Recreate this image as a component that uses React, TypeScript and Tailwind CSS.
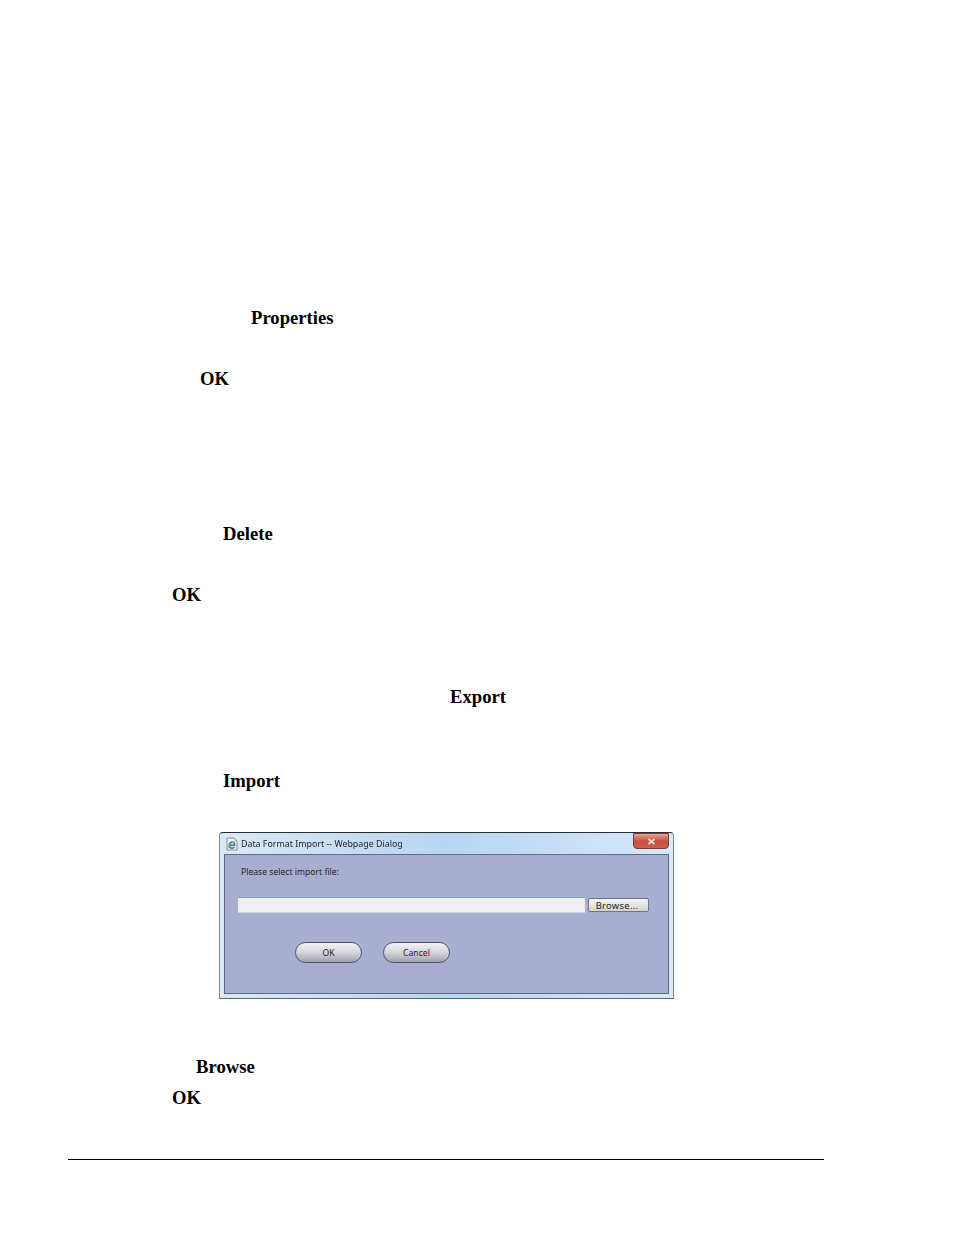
export default function App() {
  const bold = "h-6 leading-6 text-[18.67px] font-bold text-black font-['Liberation_Serif',serif] whitespace-nowrap";
  const pill = "w-[67px] h-[21px] rounded-full border-[1.5px] border-[#4a5164] bg-gradient-to-b from-[#f4f4f6] via-[#d4d4da] to-[#a0a3b2] flex items-center justify-center text-[8.6px] leading-none pt-[2px]";
  return (
    <div className="w-[954px] h-[1235px] bg-white overflow-hidden pt-[306px]">
      <div className={`${bold} pl-[251px]`}>Properties</div>
      <div className={`${bold} pl-[200px] mt-[37px]`}>OK</div>
      <div className={`${bold} pl-[223px] mt-[131px]`}>Delete</div>
      <div className={`${bold} pl-[172px] mt-[37px]`}>OK</div>
      <div className={`${bold} pl-[450px] mt-[78px]`}>Export</div>
      <div className={`${bold} pl-[223px] mt-[60px]`}>Import</div>

      <div className="ml-[219px] mt-[39px] w-[455px] h-[167px] flex flex-col rounded-t-[4px] border-t border-t-[#2b2b2b] border-x border-x-[#7d8790] border-b border-b-[#5c6670] bg-gradient-to-r from-[#dbe9f6] via-[#b7d5f1] to-[#d6e9fb] font-['Noto_Sans',sans-serif] text-[#222] blur-[0.3px]">
        <div className="h-[21px] shrink-0 flex items-center pl-[6px] pr-[4px]">
          <svg width="12" height="14" viewBox="0 0 12 14" className="shrink-0">
            <path d="M1 1h7l3 3v9H1z" fill="#eef2f6" stroke="#6f7a86" strokeWidth="0.8" />
            <path d="M3.4 8.2h5.2c0-2-1.1-3.2-2.6-3.2S3.3 6.3 3.3 8.2s1.2 3 2.8 3c1.1 0 1.9-.5 2.4-1.3" fill="none" stroke="#2a78bf" strokeWidth="1.5" />
            <path d="M1.6 11.6C3 8 6.5 4.8 9.8 3.6" fill="none" stroke="#dca21f" strokeWidth="1" />
          </svg>
          <span className="ml-[3px] pt-[2px] text-[8.85px] leading-none whitespace-nowrap">Data Format Import -- Webpage Dialog</span>
          <div className="ml-auto mt-[-5px] w-[36px] h-[16px] rounded-b-[4px] border border-[#7b3a30] bg-gradient-to-b from-[#e2a294] via-[#c6523d] to-[#c9604c] flex items-center justify-center">
            <svg width="9" height="7" viewBox="0 0 9 7">
              <path d="M1.5 1l6 5M7.5 1l-6 5" stroke="#e9dcd8" strokeWidth="1.8" />
            </svg>
          </div>
        </div>
        <div className="mx-[4px] h-[140px] shrink-0 bg-[#a9aed1] border border-[#5f6a80] flex flex-col">
          <div className="pl-[16px] mt-[11px] h-[12px] flex items-center text-[8.6px] leading-none whitespace-nowrap">Please select import file:</div>
          <div className="flex items-center pl-[13px] mt-[19px]">
            <div className="w-[347px] h-[16px] bg-[#efeff1] border-t border-t-[#7f9cc0] border-b border-b-[#c8d8ea]" />
            <div className="ml-[3px] w-[61px] h-[14px] rounded-[2px] border border-[#70757c] bg-gradient-to-b from-[#f6f6f6] to-[#d2d2d4] flex items-center justify-center text-[9.4px] leading-none tracking-[0.3px] pr-[3px] pt-[1px]">Browse...</div>
          </div>
          <div className="flex pl-[70px] mt-[29px] gap-[21px]">
            <div className={pill}>OK</div>
            <div className={pill}>Cancel</div>
          </div>
        </div>
      </div>

      <div className={`${bold} pl-[196px] mt-[56px]`}>Browse</div>
      <div className={`${bold} pl-[172px] mt-[7px]`}>OK</div>
      <div className="ml-[68px] mt-[49px] w-[756px] h-px bg-black" />
    </div>
  );
}
